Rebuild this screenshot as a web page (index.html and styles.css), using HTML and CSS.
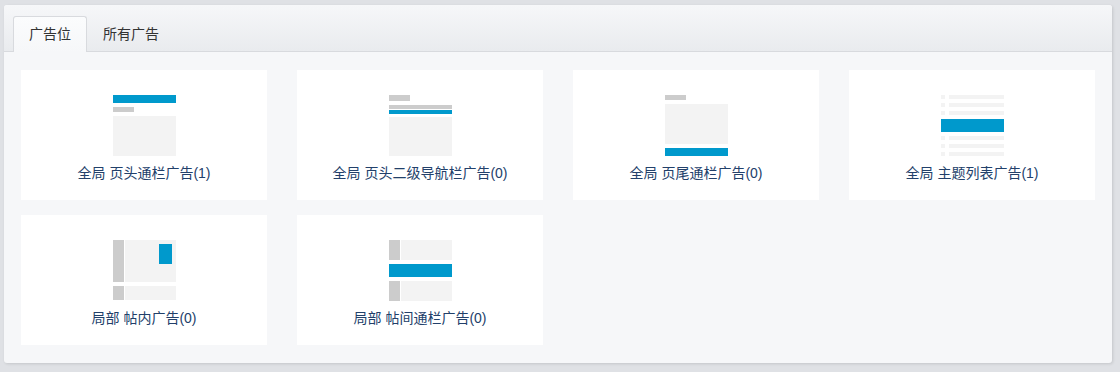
FILE: index.html
```html
<!DOCTYPE html>
<html lang="zh">
<head>
    <meta charset="UTF-8">
    <title>广告位</title>
    <link rel="stylesheet" href="styles.css">
</head>
<body>
    <div class="panel">
        <ul class="tabs">
            <li class="tab active">广告位</li>
            <li class="tab">所有广告</li>
        </ul>
        <div class="grid">
            <div class="card">
                <svg class="thumb" viewBox="0 0 63 61" width="63" height="61">
                    <rect x="0" y="0" width="63" height="8" fill="#0099cc"/>
                    <rect x="0" y="12" width="21" height="5" fill="#cccccc"/>
                    <rect x="0" y="21" width="63" height="40" fill="#f3f3f3"/>
                </svg>
                <div class="label">全局 页头通栏广告(1)</div>
            </div>
            <div class="card">
                <svg class="thumb" viewBox="0 0 63 61" width="63" height="61">
                    <rect x="0" y="0" width="21" height="6" fill="#cccccc"/>
                    <rect x="0" y="10" width="63" height="4" fill="#cccccc"/>
                    <rect x="0" y="15" width="63" height="4" fill="#0099cc"/>
                    <rect x="0" y="22" width="63" height="39" fill="#f3f3f3"/>
                </svg>
                <div class="label">全局 页头二级导航栏广告(0)</div>
            </div>
            <div class="card">
                <svg class="thumb" viewBox="0 0 63 61" width="63" height="61">
                    <rect x="0" y="0" width="21" height="5" fill="#cccccc"/>
                    <rect x="0" y="9" width="63" height="40" fill="#f3f3f3"/>
                    <rect x="0" y="53" width="63" height="8" fill="#0099cc"/>
                </svg>
                <div class="label">全局 页尾通栏广告(0)</div>
            </div>
            <div class="card">
                <svg class="thumb" viewBox="0 0 63 61" width="63" height="61">
                    <g fill="#f3f3f3">
                        <rect x="0" y="0" width="4" height="4"/><rect x="8" y="0" width="55" height="4"/>
                        <rect x="0" y="8" width="4" height="4"/><rect x="8" y="8" width="55" height="4"/>
                        <rect x="0" y="16" width="4" height="4"/><rect x="8" y="16" width="55" height="4"/>
                        <rect x="0" y="41" width="4" height="4"/><rect x="8" y="41" width="55" height="4"/>
                        <rect x="0" y="49" width="4" height="4"/><rect x="8" y="49" width="55" height="4"/>
                        <rect x="0" y="57" width="4" height="4"/><rect x="8" y="57" width="55" height="4"/>
                    </g>
                    <rect x="0" y="24" width="63" height="13" fill="#0099cc"/>
                </svg>
                <div class="label">全局 主题列表广告(1)</div>
            </div>
            <div class="card">
                <svg class="thumb" viewBox="0 0 63 61" width="63" height="61">
                    <rect x="0" y="0" width="11" height="42" fill="#cccccc"/>
                    <rect x="12" y="0" width="51" height="42" fill="#f3f3f3"/>
                    <rect x="46" y="4" width="13" height="20" fill="#0099cc"/>
                    <rect x="0" y="46" width="11" height="14" fill="#cccccc"/>
                    <rect x="12" y="46" width="51" height="14" fill="#f3f3f3"/>
                </svg>
                <div class="label">局部 帖内广告(0)</div>
            </div>
            <div class="card">
                <svg class="thumb" viewBox="0 0 63 61" width="63" height="61">
                    <rect x="0" y="0" width="11" height="20" fill="#cccccc"/>
                    <rect x="12" y="0" width="51" height="20" fill="#f3f3f3"/>
                    <rect x="0" y="24" width="63" height="13" fill="#0099cc"/>
                    <rect x="0" y="41" width="11" height="20" fill="#cccccc"/>
                    <rect x="12" y="41" width="51" height="20" fill="#f3f3f3"/>
                </svg>
                <div class="label">局部 帖间通栏广告(0)</div>
            </div>
        </div>
    </div>
</body>
</html>
```

FILE: styles.css
```css
* {box-sizing: border-box}
body {
    font-family: "Liberation Sans", Arial, "Noto Sans CJK SC", sans-serif;
    font-size: 14px;
    margin: 0;
    padding: 5px 8px 8px 4px;
    background-color: #dfe1e5;
    color: #333;
}
.panel {
    background: #f6f7f9;
    border-radius: 3px;
    box-shadow: 1px 1px 3px rgba(0,0,0,0.12);
}
.tabs {
    list-style: none;
    margin: 0;
    padding: 11px 0 0 9px;
    display: flex;
    background: linear-gradient(#f6f7f9, #e9ebee);
    border-bottom: 1px solid #d8dade;
    border-radius: 3px 3px 0 0;
}
.tab {
    padding: 0 15px;
    height: 36px;
    line-height: 34px;
    color: #333;
    border: 1px solid transparent;
    border-bottom: none;
    margin-bottom: -1px;
}
.tab.active {
    background: linear-gradient(#fbfcfd, #f6f7f9);
    border-color: #d8dade;
    border-radius: 3px 3px 0 0;
}
.grid {
    display: grid;
    grid-template-columns: repeat(4, 1fr);
    column-gap: 30px;
    row-gap: 15px;
    padding: 18px 17px 18px;
}
.card {
    background: #fff;
    height: 130px;
    padding-top: 25px;
    display: flex;
    flex-direction: column;
    align-items: center;
}
.thumb {
    display: block;
}
.label {
    margin-top: 7px;
    line-height: 20px;
    color: #22406a;
}
```
